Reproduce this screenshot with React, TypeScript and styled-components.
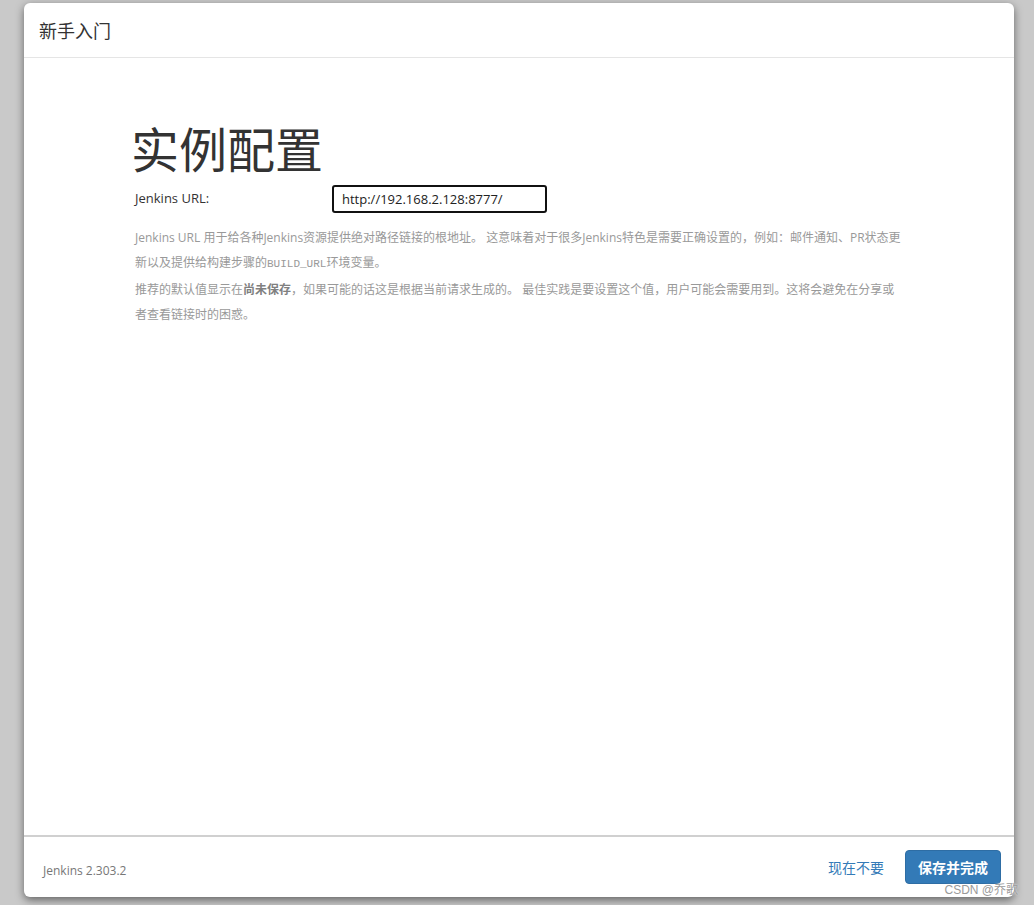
import styled, { createGlobalStyle } from "styled-components";

const GlobalStyle = createGlobalStyle`
  html, body {
    margin: 0;
    padding: 0;
    background: #c9c9c9;
    font-family: "Open Sans", "Noto Sans CJK SC", sans-serif;
  }
`;

const Backdrop = styled.div`
  position: relative;
  width: 1034px;
  height: 905px;
  box-sizing: border-box;
  padding: 3px 20px 8px 24px;
  display: flex;
`;

const Modal = styled.div`
  flex: 1;
  display: flex;
  flex-direction: column;
  background: #fff;
  border-radius: 6px;
  box-shadow: 0 3px 9px rgba(0, 0, 0, 0.5);
  overflow: hidden;
`;

const Header = styled.div`
  height: 54px;
  display: flex;
  align-items: center;
  padding: 0 15px;
  border-bottom: 1px solid #e5e5e5;
`;

const Title = styled.h4`
  margin: 0;
  font-size: 18px;
  font-weight: 400;
  color: #333;
  font-family: "Noto Sans CJK SC", sans-serif;
`;

const Body = styled.div`
  flex: 1;
  padding: 56px 100px 0 109px;
`;

const Heading = styled.h1`
  margin: 0 0 4px -2px;
  font-size: 48px;
  line-height: 67px;
  font-weight: 400;
  color: #333;
  font-family: "Noto Sans CJK SC", sans-serif;
`;

const FieldRow = styled.div`
  display: flex;
  align-items: center;
  padding-left: 2px;
`;

const Label = styled.label`
  width: 197px;
  font-size: 13px;
  color: #333;
  padding-bottom: 2px;
`;

const UrlInput = styled.input`
  width: 215px;
  height: 28px;
  box-sizing: border-box;
  border: 2px solid #111;
  border-radius: 3px;
  padding: 0 8px;
  font-size: 13px;
  font-family: "Open Sans", sans-serif;
  color: #222;
  outline: none;
`;

const Help = styled.div`
  margin-top: 12px;
  padding-left: 2px;
  width: 770px;
  font-size: 12px;
  line-height: 25px;
  color: #999;
  font-family: "Open Sans", "Noto Sans CJK SC", sans-serif;

  p {
    margin: 0;
  }

  code {
    font-family: "Liberation Mono", monospace;
    font-size: 11px;
    line-height: 25px;
  }

  strong {
    color: #808080;
    line-height: 25px;
  }
`;

const Footer = styled.div`
  height: 60px;
  border-top: 2px solid #d0d0d0;
  display: flex;
  align-items: center;
  padding: 0 13px 0 19px;
`;

const Version = styled.span`
  font-size: 12px;
  color: #777;
  margin-top: 6px;
`;

const Actions = styled.div`
  margin-left: auto;
  display: flex;
  align-items: center;
  gap: 21px;
`;

const SkipLink = styled.a`
  font-size: 14px;
  color: #337ab7;
  text-decoration: none;
  font-family: "Noto Sans CJK SC", sans-serif;
`;

const SaveButton = styled.button`
  width: 96px;
  height: 34px;
  border: 1px solid #2e6da4;
  border-radius: 4px;
  background: #337ab7;
  color: #fff;
  font-size: 14px;
  font-weight: 700;
  font-family: "Noto Sans CJK SC", sans-serif;
`;

const Watermark = styled.span`
  position: absolute;
  right: 16px;
  bottom: 8px;
  font-size: 12px;
  color: #9a9a9a;
  font-family: "Liberation Sans", "Noto Sans CJK SC", sans-serif;
  text-shadow: 0 0 2px #fff;
`;

export default function App() {
  return (
    <>
      <GlobalStyle />
      <Backdrop>
        <Modal>
          <Header>
            <Title>新手入门</Title>
          </Header>
          <Body>
            <Heading>实例配置</Heading>
            <FieldRow>
              <Label>Jenkins URL:</Label>
              <UrlInput defaultValue="http://192.168.2.128:8777/" />
            </FieldRow>
            <Help>
              <p>
                Jenkins URL 用于给各种Jenkins资源提供绝对路径链接的根地址。 这意味着对于很多Jenkins特色是需要正确设置的，例如：邮件通知、PR状态更新以及提供给构建步骤的<code>BUILD_URL</code>环境变量。
              </p>
              <p>
                推荐的默认值显示在<strong>尚未保存</strong>，如果可能的话这是根据当前请求生成的。 最佳实践是要设置这个值，用户可能会需要用到。这将会避免在分享或者查看链接时的困惑。
              </p>
            </Help>
          </Body>
          <Footer>
            <Version>Jenkins 2.303.2</Version>
            <Actions>
              <SkipLink href="#">现在不要</SkipLink>
              <SaveButton>保存并完成</SaveButton>
            </Actions>
          </Footer>
        </Modal>
        <Watermark>CSDN @乔歌</Watermark>
      </Backdrop>
    </>
  );
}
